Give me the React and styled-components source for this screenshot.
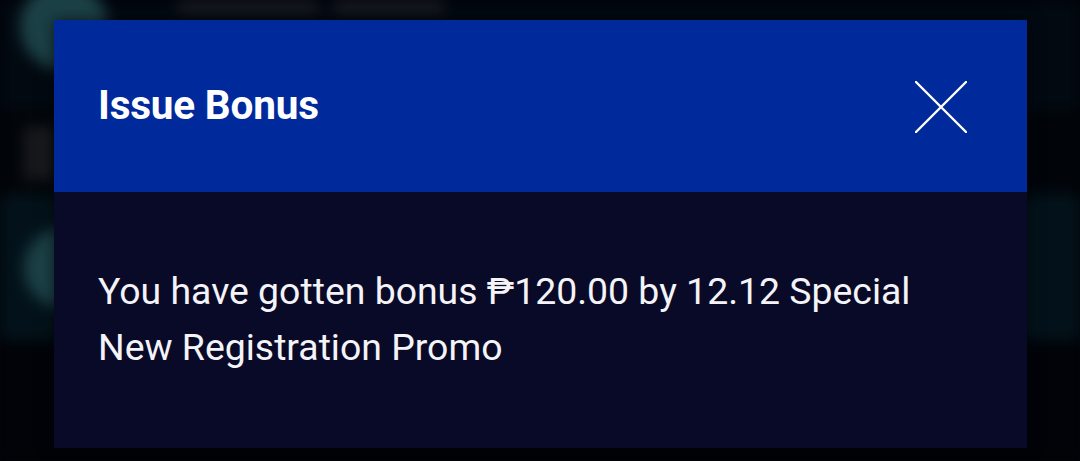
import React from 'react';
import styled, { createGlobalStyle } from 'styled-components';

const GlobalStyle = createGlobalStyle`
  html, body {
    margin: 0;
    padding: 0;
    background: #010308;
  }
  body {
    font-family: Roboto, "Liberation Sans", sans-serif;
  }
`;

const Screen = styled.div`
  position: relative;
  width: 1080px;
  height: 461px;
  overflow: hidden;
  background: #010308;
`;

const Backdrop = styled.div`
  display: flex;
  flex-direction: column;
  height: 100%;
  filter: blur(7px);
`;

const BgRow = styled.div`
  display: flex;
  align-items: ${p => p.align || 'center'};
  gap: 70px;
  height: ${p => p.h}px;
  padding: 0 0 0 ${p => p.pl || 0}px;
  background: ${p => p.bg};
  box-sizing: border-box;
`;

const Avatar = styled.div`
  width: ${p => p.size}px;
  height: ${p => p.size}px;
  border-radius: 50%;
  background: #1b4046;
  flex: none;
`;

const Thumb = styled.div`
  width: 34px;
  height: 54px;
  background: #16181c;
  flex: none;
`;

const BgLabel = styled.div`
  width: ${p => p.w}px;
  height: 14px;
  background: #181b22;
  border-radius: 2px;
`;

const Labels = styled.div`
  display: flex;
  gap: 16px;
  align-self: flex-start;
`;

const Modal = styled.div`
  position: absolute;
  left: 54px;
  top: 20px;
  width: 973px;
  display: flex;
  flex-direction: column;
  box-shadow: 0 0 14px rgba(0, 0, 0, 0.6);
`;

const Header = styled.div`
  height: 172px;
  display: flex;
  align-items: center;
  justify-content: space-between;
  padding: 0 60px 0 44px;
  background: #002a9b;
`;

const Title = styled.h2`
  margin: 0;
  margin-top: -3px;
  font-family: Roboto, "Liberation Sans", sans-serif;
  font-weight: 700;
  font-size: 40.5px;
  color: #ffffff;
  letter-spacing: -0.2px;
`;

const CloseButton = styled.button`
  width: 52px;
  height: 52px;
  padding: 0;
  border: none;
  background: none;
  display: flex;
  align-items: center;
  justify-content: center;
  cursor: pointer;
  margin-top: 1px;
`;

const Body = styled.div`
  height: 256px;
  box-sizing: border-box;
  padding: 71px 44px 0 44px;
  background: #090a28;
`;

const Message = styled.p`
  margin: 0;
  max-width: 860px;
  font-family: Roboto, "DejaVu Sans", sans-serif;
  font-size: 37.4px;
  line-height: 56px;
  color: #f4f4f8;
`;

const App = () => (
  <Screen>
    <GlobalStyle />
    <Backdrop>
      <BgRow h={110} bg="#020911" align="flex-start" pl={20}>
        <Avatar size={88} style={{ marginTop: -18 }} />
        <Labels>
          <BgLabel w={140} />
          <BgLabel w={110} />
        </Labels>
      </BgRow>
      <BgRow h={85} bg="#01050a" pl={24}>
        <Thumb />
      </BgRow>
      <BgRow h={145} bg="#03121a" pl={24}>
        <Avatar size={80} />
      </BgRow>
      <BgRow h={121} bg="#010308" />
    </Backdrop>
    <Modal>
      <Header>
        <Title>Issue Bonus</Title>
        <CloseButton aria-label="Close">
          <svg width="52" height="52" viewBox="0 0 52 52">
            <path
              d="M1 1 L51 51 M51 1 L1 51"
              stroke="#ffffff"
              strokeWidth="2.4"
              strokeLinecap="round"
            />
          </svg>
        </CloseButton>
      </Header>
      <Body>
        <Message>
          You have gotten bonus ₱120.00 by 12.12 Special New Registration Promo
        </Message>
      </Body>
    </Modal>
  </Screen>
);

export default App;
